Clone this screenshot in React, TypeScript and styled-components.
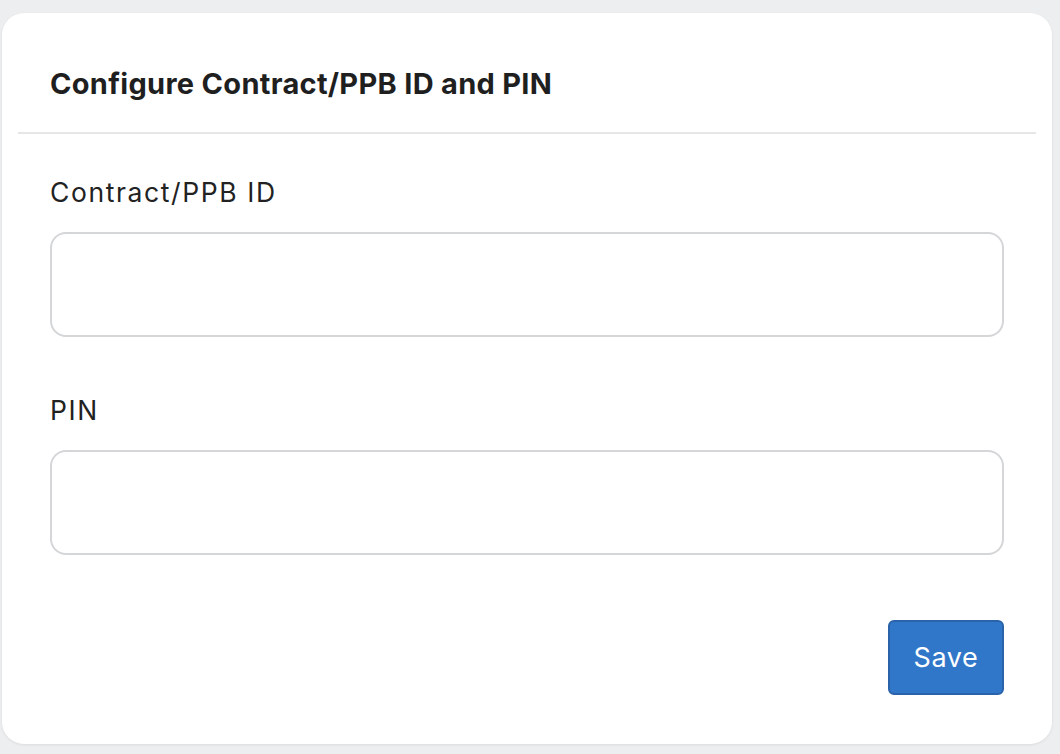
import React from "react";
import styled, { createGlobalStyle } from "styled-components";

const Global = createGlobalStyle`
  html, body { margin: 0; padding: 0; background: #eceef0; }
  body { font-family: Inter, "Noto Sans", sans-serif; color: #222; }
  * { box-sizing: border-box; }
`;

const Page = styled.div`
  width: 1060px;
  height: 754px;
  padding: 13px 8px 10px 2px;
`;

const Card = styled.div`
  background: #fff;
  border-radius: 22px;
  box-shadow: 0 1px 3px rgba(0, 0, 0, 0.08);
  height: 731px;
  display: flex;
  flex-direction: column;
`;

const Header = styled.div`
  margin: 0 16px;
  height: 121px;
  border-bottom: 2px solid #e6e6e6;
  padding: 56px 32px 0 32px;
`;

const Title = styled.h1`
  margin: 0;
  font-size: 29px;
  line-height: 29px;
  font-weight: 700;
  color: #1f1f1f;
  letter-spacing: 0.3px;
`;

const Body = styled.form`
  padding: 42px 48px 0 48px;
  display: flex;
  flex-direction: column;
`;

const Field = styled.div`
  display: flex;
  flex-direction: column;
  gap: 24px;
  margin-bottom: 57px;
`;

const Label = styled.label`
  font-size: 26.5px;
  line-height: 32px;
  color: #222;
  letter-spacing: 1.6px;
`;

const Input = styled.input`
  height: 105px;
  border: 2px solid #d4d6d8;
  border-radius: 16px;
  padding: 0 20px;
  font-size: 24px;
  font-family: inherit;
  outline: none;
`;

const Footer = styled.div`
  display: flex;
  justify-content: flex-end;
  margin-top: 8px;
`;

const Button = styled.button`
  width: 116px;
  height: 75px;
  background: #3077c9;
  border: 2px solid #2a63a9;
  border-radius: 6px;
  color: #fff;
  font-size: 27px;
  letter-spacing: 0.6px;
  font-family: inherit;
  cursor: pointer;
`;

export default function App() {
  return (
    <>
      <Global />
      <Page>
        <Card>
          <Header>
            <Title>Configure Contract/PPB ID and PIN</Title>
          </Header>
          <Body onSubmit={(e) => e.preventDefault()}>
            <Field>
              <Label>Contract/PPB ID</Label>
              <Input type="text" />
            </Field>
            <Field>
              <Label>PIN</Label>
              <Input type="password" />
            </Field>
            <Footer>
              <Button type="submit">Save</Button>
            </Footer>
          </Body>
        </Card>
      </Page>
    </>
  );
}
